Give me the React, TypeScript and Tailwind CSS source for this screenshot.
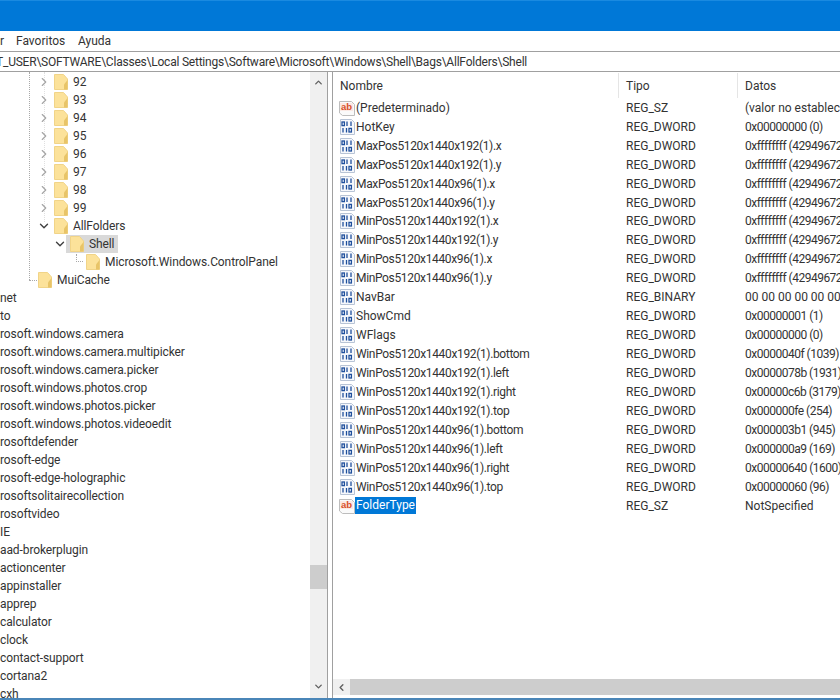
import React from "react";
import { ChevronDown, ChevronLeft, ChevronRight, ChevronUp } from "lucide-react";

type TreeRow = {
  label: string;
  pad?: string;
  exp?: "open" | "closed";
  folder?: boolean;
  selected?: boolean;
};

const tree: TreeRow[] = [
  ...["92", "93", "94", "95", "96", "97", "98", "99"].map((label) => ({ label, pad: "pl-[38px]", exp: "closed" as const, folder: true })),
  { label: "AllFolders", pad: "pl-[38px]", exp: "open", folder: true },
  { label: "Shell", pad: "pl-[54px]", exp: "open", folder: true, selected: true },
  { label: "Microsoft.Windows.ControlPanel", pad: "pl-[70px]", folder: true },
  { label: "MuiCache", pad: "pl-[22px]", folder: true },
  { label: "net" },
  { label: "to" },
  { label: "rosoft.windows.camera" },
  { label: "rosoft.windows.camera.multipicker" },
  { label: "rosoft.windows.camera.picker" },
  { label: "rosoft.windows.photos.crop" },
  { label: "rosoft.windows.photos.picker" },
  { label: "rosoft.windows.photos.videoedit" },
  { label: "rosoftdefender" },
  { label: "rosoft-edge" },
  { label: "rosoft-edge-holographic" },
  { label: "rosoftsolitairecollection" },
  { label: "rosoftvideo" },
  { label: "IE" },
  { label: "aad-brokerplugin" },
  { label: "actioncenter" },
  { label: "appinstaller" },
  { label: "apprep" },
  { label: "calculator" },
  { label: "clock" },
  { label: "contact-support" },
  { label: "cortana2" },
  { label: "cxh" },
];

const ffff = "0xffffffff (4294967295)";

const values: [string, string, string][] = [
  ["(Predeterminado)", "REG_SZ", "(valor no establecido)"],
  ["HotKey", "REG_DWORD", "0x00000000 (0)"],
  ["MaxPos5120x1440x192(1).x", "REG_DWORD", ffff],
  ["MaxPos5120x1440x192(1).y", "REG_DWORD", ffff],
  ["MaxPos5120x1440x96(1).x", "REG_DWORD", ffff],
  ["MaxPos5120x1440x96(1).y", "REG_DWORD", ffff],
  ["MinPos5120x1440x192(1).x", "REG_DWORD", ffff],
  ["MinPos5120x1440x192(1).y", "REG_DWORD", ffff],
  ["MinPos5120x1440x96(1).x", "REG_DWORD", ffff],
  ["MinPos5120x1440x96(1).y", "REG_DWORD", ffff],
  ["NavBar", "REG_BINARY", "00 00 00 00 00 00 00 00 00 00"],
  ["ShowCmd", "REG_DWORD", "0x00000001 (1)"],
  ["WFlags", "REG_DWORD", "0x00000000 (0)"],
  ["WinPos5120x1440x192(1).bottom", "REG_DWORD", "0x0000040f (1039)"],
  ["WinPos5120x1440x192(1).left", "REG_DWORD", "0x0000078b (1931)"],
  ["WinPos5120x1440x192(1).right", "REG_DWORD", "0x00000c6b (3179)"],
  ["WinPos5120x1440x192(1).top", "REG_DWORD", "0x000000fe (254)"],
  ["WinPos5120x1440x96(1).bottom", "REG_DWORD", "0x000003b1 (945)"],
  ["WinPos5120x1440x96(1).left", "REG_DWORD", "0x000000a9 (169)"],
  ["WinPos5120x1440x96(1).right", "REG_DWORD", "0x00000640 (1600)"],
  ["WinPos5120x1440x96(1).top", "REG_DWORD", "0x00000060 (96)"],
  ["FolderType", "REG_SZ", "NotSpecified"],
];

const Folder = () => (
  <svg width="14" height="16" viewBox="0 0 14 16" className="shrink-0">
    <path d="M0.5 0.5H9.5L13.5 5V15.5H0.5Z" fill="#fce29a" stroke="#f1d488" />
    <path d="M10 10.5L13.5 6V15.5H10Z" fill="#e8c468" />
  </svg>
);

const StringIcon = () => (
  <svg width="16" height="16" viewBox="0 0 16 16" className="shrink-0">
    <path d="M0.5 1.5H12.5L15.5 4.5V15.5H3.5L0.5 13Z" fill="#fafafa" stroke="#bdbdbd" />
    <rect x="1" y="3" width="13" height="8" fill="#fbe9e4" />
    <text x="7.5" y="10" fontSize="9.5" fontWeight="700" textAnchor="middle" fill="#d8502a" fontFamily="Liberation Sans, sans-serif">ab</text>
  </svg>
);

const DwordIcon = () => (
  <svg width="16" height="16" viewBox="0 0 16 16" className="shrink-0">
    <path d="M1.5 0.5H12.5L15.5 3.5V15.5H1.5Z" fill="#f6f8fc" stroke="#b8c4d6" />
    <g fill="none" stroke="#1f4f9c" strokeWidth="1.3">
      <rect x="3" y="3" width="2.4" height="3.6" />
      <path d="M8 2.6V7M12 2.6V7" />
      <path d="M4 9V13.4M7.5 9V13.4" />
      <rect x="10" y="9.4" width="2.4" height="3.6" />
    </g>
  </svg>
);

const App: React.FC = () => {
  return (
    <div className="h-[700px] w-[840px] overflow-hidden flex flex-col bg-white text-[12px] text-[#333] font-['Roboto','Noto_Sans',sans-serif]">
      <div className="h-[31px] shrink-0 bg-[#0078d7] border-t border-[#1a8ae0]" />

      <div className="h-[20px] shrink-0 flex items-center whitespace-nowrap">
        <span className="w-[16px]">r</span>
        <span className="w-[62px]">Favoritos</span>
        <span>Ayuda</span>
      </div>

      <div className="h-[21px] shrink-0 flex items-center overflow-hidden whitespace-nowrap border-y border-[#a0a0a0]">
        <span className="-ml-[4px] tracking-[-0.22px]">T_USER\SOFTWARE\Classes\Local Settings\Software\Microsoft\Windows\Shell\Bags\AllFolders\Shell</span>
      </div>

      <div className="flex-1 min-h-0 flex">
        {/* tree */}
        <div className="relative w-[310px] shrink-0 overflow-hidden pt-[1px] whitespace-nowrap tracking-[-0.1px]">
          <div className="absolute left-[29px] top-0 h-[208px] border-l border-dotted border-[#a8a8a8]" />
          <div className="absolute left-[29px] top-[208px] w-[8px] border-t border-dotted border-[#a8a8a8]" />
          <div className="absolute left-[44px] top-0 h-[150px] border-l border-dotted border-[#e0e0e0]" />
          <div className="absolute left-[76px] top-[182px] h-[8px] w-[7px] border-l border-b border-dotted border-[#a8a8a8]" />
          {tree.map((r) => (
            <div key={r.label} className={`relative h-[18px] flex items-center ${r.pad ?? ""}`}>
              {r.folder && (
                <span className="w-[16px] shrink-0 flex -ml-[1px] mr-[1px]">
                  {r.exp === "closed" && <ChevronRight size={14} strokeWidth={2} color="#a6a6a6" />}
                  {r.exp === "open" && <ChevronDown size={14} strokeWidth={2.4} color="#404040" />}
                </span>
              )}
              <span className={`flex items-center h-[18px] gap-[5px] ${r.selected ? "bg-[#d9d9d9] pl-[4px] pr-[4px] -ml-[4px]" : ""}`}>
                {r.folder && <Folder />}
                <span>{r.label}</span>
              </span>
            </div>
          ))}
        </div>

        {/* tree scrollbar */}
        <div className="w-[17px] shrink-0 bg-[#f0f0f0] flex flex-col items-center pb-[2px]">
          <div className="h-[21px] flex items-center justify-center">
            <ChevronUp size={11} strokeWidth={3} color="#606060" />
          </div>
          <div className="mt-[472px] h-[24px] w-full bg-[#cdcdcd]" />
          <div className="mt-auto h-[20px] flex items-center justify-center">
            <ChevronDown size={11} strokeWidth={3} color="#606060" />
          </div>
        </div>

        {/* splitter */}
        <div className="w-[6px] shrink-0 border-x border-[#a0a0a0]" />

        {/* values */}
        <div className="flex-1 min-w-0 flex flex-col overflow-hidden whitespace-nowrap">
          <div className="h-[26.4px] shrink-0 flex items-center pt-[1px]">
            <div className="w-[286px] shrink-0 pl-[7px] border-r border-[#e5e5e5] h-full flex items-center">Nombre</div>
            <div className="w-[119px] shrink-0 pl-[7px] border-r border-[#e5e5e5] h-full flex items-center">Tipo</div>
            <div className="pl-[7px] shrink-0">Datos</div>
          </div>
          <div className="flex-1 min-h-0">
            {values.map(([name, type, data]) => (
              <div key={name} className="h-[18.95px] flex items-center">
                <div className="w-[286px] shrink-0 pl-[6px] flex items-center">
                  {type === "REG_SZ" ? <StringIcon /> : <DwordIcon />}
                  <span className={`${name === "FolderType" ? "bg-[#0078d7] text-white px-[1px] leading-[17px]" : "px-[1px]"} ${/\d/.test(name) ? "tracking-[-0.35px]" : ""}`}>{name}</span>
                </div>
                <div className="w-[119px] shrink-0 pl-[7px]">{type}</div>
                <div className={`pl-[7px] shrink-0 ${data.startsWith("0x") ? "tracking-[-0.5px]" : ""}`}>{data}</div>
              </div>
            ))}
          </div>
          <div className="h-[16px] mb-[3px] shrink-0 flex bg-[#cdcdcd]">
            <div className="w-[17px] bg-[#f0f0f0] flex items-center justify-center">
              <ChevronLeft size={11} strokeWidth={3} color="#606060" />
            </div>
          </div>
        </div>
      </div>

      <div className="h-[2px] shrink-0 bg-[#4a86b8]" />
    </div>
  );
};

export default App;
